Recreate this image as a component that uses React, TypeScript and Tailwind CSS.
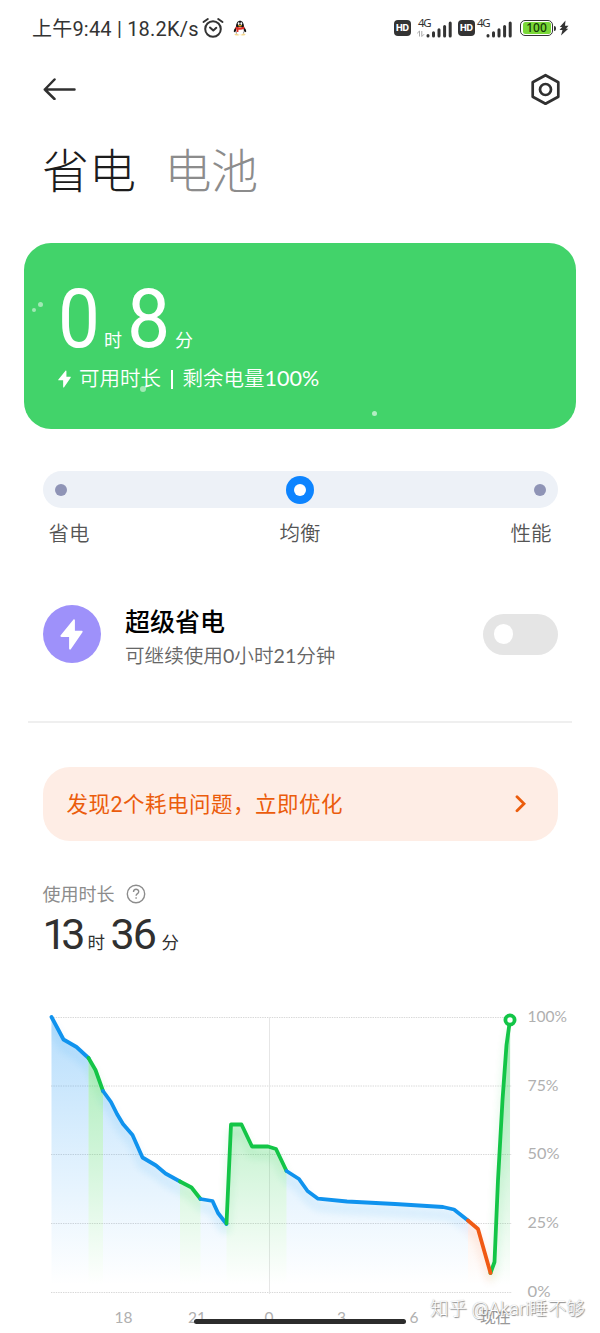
import React from "react";

type Point = [number, number];
type Tone = "blue" | "green" | "orange";
type Segment = { tone: Tone; points: Point[] };

const strokes: Record<Tone, string> = { blue: "#1093ee", green: "#13c547", orange: "#f05a14" };

const segments: Segment[] = [
  { tone: "blue", points: [[51.5, 1017], [63.5, 1039.5], [76.5, 1047], [88.5, 1058]] },
  { tone: "green", points: [[88.5, 1058], [95.5, 1070], [103, 1091]] },
  { tone: "blue", points: [[103, 1091], [111, 1102], [117, 1114], [123, 1124], [132.5, 1135], [142.5, 1157.5], [156, 1165.5], [165.5, 1173.5], [180, 1181.5]] },
  { tone: "green", points: [[180, 1181.5], [191.5, 1187.5], [200.5, 1199]] },
  { tone: "blue", points: [[200.5, 1199], [212.5, 1201], [218, 1213], [226.5, 1224]] },
  { tone: "green", points: [[226.5, 1223.5], [231, 1124.5], [241.5, 1124.5], [252, 1146.5], [268, 1146.5], [276, 1149], [286.5, 1171]] },
  { tone: "blue", points: [[286.5, 1171], [299, 1179], [307.5, 1191], [318, 1198.7], [347, 1201.5], [395, 1204], [443, 1207], [454, 1209.5], [468, 1220.5]] },
  { tone: "green", points: [[490.5, 1273], [494.5, 1262], [498, 1180], [502.5, 1100], [506.5, 1045], [510, 1020]] },
  { tone: "orange", points: [[468, 1220.5], [478, 1229], [490.5, 1273]] },
];

const path = (points: Point[]) => points.map((p) => p.join(",")).join(" ");
const area = (points: Point[]) =>
  `${points[0][0]},1292 ${path(points)} ${points[points.length - 1][0]},1292`;

const levels = [
  { y: 1017.5, label: "100%", width: 39.5 },
  { y: 1086, label: "75%", width: 31 },
  { y: 1154.5, label: "50%", width: 32 },
  { y: 1223.5, label: "25%", width: 31.5 },
  { y: 1292.5, label: "0%", width: 23 },
];
const hours = [
  { x: 123.5, label: "18" },
  { x: 197, label: "21" },
  { x: 269, label: "0" },
  { x: 341.5, label: "3" },
  { x: 414, label: "6" },
];

function BatteryChart() {
  return (
    <svg className="block h-[343px] w-[600px]" viewBox="0 990 600 343" fill="none">
      <defs>
        <linearGradient id="blueFill" gradientUnits="userSpaceOnUse" x1="0" y1="1017" x2="0" y2="1285">
          <stop stopColor="#1d97f5" stopOpacity=".32" />
          <stop offset=".5" stopColor="#1d97f5" stopOpacity=".15" />
          <stop offset="1" stopColor="#1d97f5" stopOpacity="0" />
        </linearGradient>
        <linearGradient id="greenFill" gradientUnits="userSpaceOnUse" x1="0" y1="1030" x2="0" y2="1285">
          <stop stopColor="#2bd052" stopOpacity=".42" />
          <stop offset=".5" stopColor="#2bd052" stopOpacity=".22" />
          <stop offset="1" stopColor="#2bd052" stopOpacity="0" />
        </linearGradient>
        <linearGradient id="orangeFill" gradientUnits="userSpaceOnUse" x1="0" y1="1220" x2="0" y2="1285">
          <stop stopColor="#f05a14" stopOpacity=".08" />
          <stop offset="1" stopColor="#f05a14" stopOpacity="0" />
        </linearGradient>
        <filter id="soft" filterUnits="userSpaceOnUse" x="40" y="1000" width="485" height="310">
          <feGaussianBlur stdDeviation="4" />
        </filter>
        <clipPath id="plot">
          <rect x="51" y="1010" width="460" height="283" />
        </clipPath>
      </defs>
      {levels.map((l) => (
        <line key={l.label} x1="51" x2="512" y1={l.y} y2={l.y} stroke="#d8d8d8" strokeWidth="1" strokeDasharray="1.4 1" />
      ))}
      <line x1="269.5" x2="269.5" y1="1017" y2="1294" stroke="#e6e6e6" />
      <g clipPath="url(#plot)">
        {segments.map((s, i) => (
          <polygon key={i} points={area(s.points)} fill={`url(#${s.tone}Fill)`} />
        ))}
        <g filter="url(#soft)" opacity=".16" transform="translate(0 8)">
          {segments.map((s, i) => (
            <polyline key={i} points={path(s.points)} stroke={strokes[s.tone]} strokeWidth="5" />
          ))}
        </g>
      </g>
      {segments.map((s, i) => (
        <polyline key={i} points={path(s.points)} stroke={strokes[s.tone]} strokeWidth="3.8" strokeLinecap="round" strokeLinejoin="round" />
      ))}
      <circle cx="510" cy="1020" r="4.6" fill="#fff" stroke="#13c547" strokeWidth="3.8" />
      <g fill="#b0b0b0" fontSize="16" className="font-['Lato','Noto_Sans_CJK_SC',sans-serif]">
        {levels.map((l) => (
          <text key={l.label} x="527.5" y={l.y + 4.7} textLength={l.width} lengthAdjust="spacingAndGlyphs">{l.label}</text>
        ))}
        {hours.map((h) => (
          <text key={h.label} x={h.x} y="1322.5" textAnchor="middle" fontSize="15.5">{h.label}</text>
        ))}
        <text x="480" y="1322.5" fill="#999" fontSize="16" textLength="31">现在</text>
      </g>
    </svg>
  );
}

function HdBadge() {
  return (
    <span className="flex h-[15.5px] w-[17px] items-center justify-center rounded-[4px] bg-[#333] font-['Inter',sans-serif] text-[9px] font-extrabold text-white">
      HD
    </span>
  );
}

function Signal({ data }: { data?: boolean }) {
  return (
    <svg className="block h-[26px] w-[36px]" viewBox="0 -4 36 26">
      <text x={data ? 2 : 1} y="9" fontSize="11.500" fill="#333" textLength="13.500" className="font-['Noto_Sans',sans-serif]">4G</text>
      {data && <path d="M3.500 18.500v-5.500l-2.300 2.300M5.800 13v5.500l2.300-2.300" stroke="#aaa" strokeWidth="1" fill="none" />}
      <path d="M12 17.500v.5M17.500 14.800v3.200M23 11.800v6.200M28.600 8.500v9.500M34.200 5v13" stroke="#333" strokeWidth="3" strokeLinecap="round" />
    </svg>
  );
}

function StatusBar() {
  return (
    <div className="flex h-14 items-center pl-[32px] text-[#333]">
      <span className="w-[170px] whitespace-nowrap pt-px text-[20px] leading-none tracking-[0.200px]">上午9:44 | 18.2K/s</span>
      <svg className="h-[22px] w-[23px] shrink-0" viewBox="0 0 23 22" fill="none" stroke="#333" strokeWidth="2" strokeLinecap="round" strokeLinejoin="round">
        <circle cx="11" cy="12" r="7.800" />
        <path d="M8 10.500l3.300 3 3-2.700M1.500 5l4.300-3M16.200 2l4.300 3" />
      </svg>
      <svg className="ml-[8px] h-[16px] w-[14px] shrink-0" viewBox="0 0 14 16">
        <path d="M3 7C3-1.200 11-1.200 11 7c2 2.200 2.500 4 2 5-.6.500-1-.3-1.500-1-.2 1.500-.8 2.300-1.300 2.800H3.800C3.200 13 2.700 12.500 2.500 11 2 12 1.500 12.500 1 12c-.5-1 0-2.800 2-5z" fill="#151515" />
        <ellipse cx="4.200" cy="14.500" rx="2.700" ry="1" fill="#f6d68a" />
        <ellipse cx="9.800" cy="14.500" rx="2.700" ry="1" fill="#f6d68a" />
        <ellipse cx="7" cy="10.800" rx="3.900" ry="3.900" fill="#fff" />
        <path d="M2.800 6.500c2.600 1.400 5.800 1.400 8.400 0l.2 2.200c-2 1-4.200 1.200-6 1V12H3.600V9.400L2.600 8.800z" fill="#e32c24" />
        <ellipse cx="5.700" cy="3.600" rx=".9" ry="1.300" fill="#fff" />
        <ellipse cx="8.300" cy="3.600" rx=".9" ry="1.300" fill="#fff" />
        <ellipse cx="7" cy="5.700" rx="2" ry=".7" fill="#f6b21a" />
      </svg>
      <div className="ml-[147px] flex items-center">
        <HdBadge />
        <div className="ml-[5px] -mt-[3px]"><Signal data /></div>
        <div className="ml-[6px]"><HdBadge /></div>
        <div className="ml-[1px] -mt-[3px]"><Signal /></div>
      </div>
      <div className="ml-[8px] flex h-[16.500px] w-[33px] items-center justify-center rounded-[5px] border-[1.500px] border-[#333] p-[1.500px]">
        <span className="flex h-full w-full items-center justify-center rounded-[2.500px] bg-[#7ad838] font-['Noto_Sans',sans-serif] text-[12px] font-medium leading-none text-[#143a06]">100</span>
      </div>
      <span className="ml-[1px] h-[5px] w-[2px] rounded-r-sm bg-[#333]" />
      <svg className="ml-[3px] h-[16px] w-[10px]" viewBox="0 0 10 16">
        <path d="M6.500.5L.8 7h2.400L.5 10h3L2 15.500 9.300 8.800H7L9.500 5.700H6z" fill="#333" />
      </svg>
    </div>
  );
}

function Bolt({ className }: { className: string }) {
  return (
    <svg className={className} viewBox="0 0 23 31" fill="#fff">
      <path d="M13.300.7c.6-.8 1.600-.4 1.600.6v10.400h6.600c1.100 0 1.500.9.800 1.700L10.800 30.200c-.6.800-1.700.4-1.700-.6V17.900H1.500c-1.100 0-1.500-.8-.8-1.700z" />
    </svg>
  );
}

export default function App() {
  return (
    <main className="relative h-[1333px] w-[600px] overflow-hidden bg-white font-['Roboto','Noto_Sans_CJK_SC',sans-serif]">
      <StatusBar />

      <nav className="flex h-[66px] items-center justify-between pl-[43px] pr-[39px]">
        <svg className="h-[22px] w-[33px]" viewBox="0 0 33 22" fill="none" stroke="#303030" strokeWidth="2.500" strokeLinecap="round" strokeLinejoin="round">
          <path d="M11.500 1.500L1.800 11.500l9.700 9.500M1.800 11.500H31.500" />
        </svg>
        <svg className="h-[32px] w-[31px]" viewBox="0 0 31 32" fill="none" stroke="#303030" strokeWidth="2.700" strokeLinejoin="round">
          <path d="M15.500 2.200L28.300 9.300v14.400L15.500 30.800 2.700 23.700V9.300z" />
          <circle cx="15.500" cy="16.500" r="5.500" />
        </svg>
      </nav>

      <header className="flex h-[121px] items-start gap-[28.500px] pl-[42px] pt-[25px] text-[47px] leading-[50px]">
        <h1 className="font-light text-[#1c1c1c]">省电</h1>
        <span className="font-light tracking-[-0.500px] text-[#8c8c8c]">电池</span>
      </header>

      <section className="relative mx-[24px] h-[186px] rounded-[27px] bg-[#42d36a] pl-[34px] pt-[42px] text-white">
        <div className="flex h-[70px] items-baseline leading-[70px]">
          <span className="w-[46px] text-[81px]"><span className="inline-block origin-left scale-x-[.92] font-[450]">0</span></span>
          <span className="w-[23px] text-[18px]">时</span>
          <span className="w-[48px] text-[81px]"><span className="inline-block origin-left scale-x-[.95] font-[450]">8</span></span>
          <span className="text-[18px]">分</span>
        </div>
        <div className="mt-[11px] flex h-[26px] items-center text-[20.500px] leading-none">
          <Bolt className="mr-[8px] h-[20px] w-[13px]" />
          <span className="whitespace-nowrap font-[350]">可用时长</span>
          <span className="mx-[10px] h-[19px] w-[1.500px] bg-white" />
          <span className="whitespace-nowrap font-[350]">剩余电量<span className="font-['Lato'] text-[21.500px] font-normal">100%</span></span>
        </div>
        <i className="absolute left-[14px] top-[59px] size-[5px] rounded-full bg-white/50" />
        <i className="absolute left-[8px] top-[65px] size-[4px] rounded-full bg-white/50" />
        <i className="absolute left-[116px] top-[143px] size-[6px] rounded-full bg-white/50" />
        <i className="absolute left-[348px] top-[168px] size-[5px] rounded-full bg-white/60" />
      </section>

      <section className="mt-[42px] px-[42.5px]">
        <div className="flex h-[37px] items-center justify-between rounded-full bg-[#edf1f7] px-[12px]">
          <span className="size-[12px] rounded-full bg-[#8f94b6]" />
          <span className="flex size-[28px] items-center justify-center rounded-full bg-[#0d84ff]">
            <span className="size-[12px] rounded-full bg-white" />
          </span>
          <span className="size-[12px] rounded-full bg-[#8f94b6]" />
        </div>
        <div className="flex h-[50px] items-center justify-between px-[6px] pt-[2px] text-[20.500px] font-[350] text-[#555]">
          <span>省电</span><span>均衡</span><span>性能</span>
        </div>
      </section>

      <section className="mt-[47px] flex h-[58px] items-center px-[42.5px]">
        <span className="flex size-[58.500px] shrink-0 items-center justify-center rounded-full bg-[#9e91fa]">
          <Bolt className="h-[31px] w-[23px]" />
        </span>
        <div className="ml-[24px] flex-1 whitespace-nowrap pt-[8px]">
          <h2 className="text-[25px] font-medium leading-[36px] text-black">超级省电</h2>
          <p className="text-[19.600px] font-[350] leading-[30px] text-[#666]">可继续使用<span className="font-['Lato'] font-normal">0</span>小时<span className="font-['Lato'] font-normal">21</span>分钟</p>
        </div>
        <span className="flex h-[41px] w-[75px] items-center rounded-full bg-[#e5e5e5] pl-[11px]">
          <span className="size-[19.500px] rounded-full bg-white" />
        </span>
      </section>

      <hr className="mx-[28px] mt-[58px] h-[1.500px] border-0 bg-[#efefef]" />

      <section className="mx-[42.5px] mt-[44.500px] flex h-[74px] items-center justify-between rounded-[27px] bg-[#feede5] pl-[24px] pr-[31px] text-[21.500px] text-[#eb5c0c]">
        <span className="whitespace-nowrap pt-[3px] tracking-[0.500px]">发现2个耗电问题，立即优化</span>
        <svg className="h-[18px] w-[12px]" viewBox="0 0 12 18" fill="none" stroke="#eb5c0c" strokeWidth="2.800">
          <path d="M2 1.800l7 7-7 7" strokeLinecap="round" />
        </svg>
      </section>

      <section className="h-[149px] pl-[42.5px] pt-[40px]">
        <div className="flex h-[26px] items-center text-[18px] text-[#8c8c8c]">
          <span>使用时长</span>
          <svg className="-mt-px ml-[11px] size-[20px]" viewBox="0 0 20 20" fill="none" stroke="#8c8c8c" strokeWidth="1.400">
            <circle cx="10" cy="10" r="8.700" />
            <path d="M7.500 8c0-3.700 5.200-3.500 5.200-.3 0 2-2.600 1.900-2.600 4.100M10.100 13.200v1.600" />
          </svg>
        </div>
        <div className="flex h-[54px] items-baseline leading-[55px] text-[#303030]">
          <span className="w-[45px] text-[43px] tracking-[-5.500px]">13</span>
          <span className="w-[23px] text-[17.500px]">时</span>
          <span className="w-[51px] text-[43px] tracking-[-2px]">36</span>
          <span className="text-[17.500px]">分</span>
        </div>
      </section>

      <BatteryChart />

      <div className="absolute left-[194px] top-[1319px] h-[5px] w-[212px] rounded-full bg-[#2c2c2c]" />
      <div className="absolute left-[430px] top-[1296px] whitespace-nowrap text-[18.500px] font-light leading-[26px] text-white [text-shadow:1px_1px_1px_#888,0_0_1px_#aaa]">
        知乎 @Akari睡不够
      </div>
    </main>
  );
}
